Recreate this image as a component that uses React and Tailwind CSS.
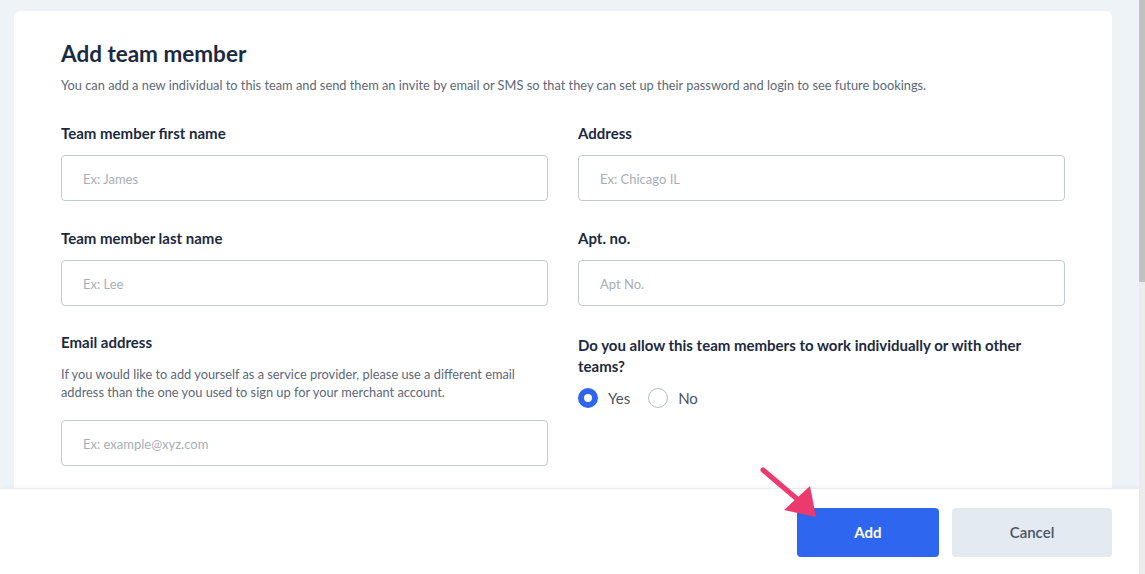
import React from "react";

const Field = ({ label, placeholder }) => (
  <div className="flex flex-col">
    <label className="text-[15px] leading-5 font-bold text-[#1b2a41]">{label}</label>
    <div className="mt-3 h-[46px] rounded-[4px] border border-[#c5cad1] bg-white flex items-center pl-[21px] pt-[3px]">
      <span className="text-[13px] text-[#a8aeb7]">{placeholder}</span>
    </div>
  </div>
);

const Radio = ({ checked, label }) => (
  <div className="flex items-center gap-[10px]">
    <span
      className={
        checked
          ? "w-5 h-5 rounded-full border-[6px] border-[#2f66f0] bg-white"
          : "w-5 h-5 rounded-full border border-[#b5bbc4] bg-white"
      }
    />
    <span className="text-[15px] text-[#4a5463]">{label}</span>
  </div>
);

export default function App() {
  return (
    <div className="flex h-[574px] w-[1145px] overflow-hidden bg-[#eef3f8]" style={{ fontFamily: "Lato, 'Open Sans', sans-serif" }}>
      <div className="relative flex flex-col w-[1139px] h-full">
        {/* Scrolling content */}
        <div className="flex-1 overflow-hidden px-[14px] pt-[11px] pr-[27px]">
          <div className="bg-white rounded-[6px] px-[47px] pt-[29px] pb-10 h-[600px]">
            <h1 className="text-[22.5px] leading-7 font-bold text-[#1b2a41]">Add team member</h1>
            <p className="mt-2 text-[12.8px] leading-[18px] text-[#5d6778]">
              You can add a new individual to this team and send them an invite by email or SMS so that they can set up their password and login to see future bookings.
            </p>

            <div className="mt-[29px] grid grid-cols-2 gap-x-[30px]">
              <div className="flex flex-col gap-[27px]">
                <Field label="Team member first name" placeholder="Ex: James" />
                <Field label="Team member last name" placeholder="Ex: Lee" />
                <div className="flex flex-col -mt-[1px]">
                  <label className="text-[15px] leading-5 font-bold text-[#1b2a41]">Email address</label>
                  <p className="mt-[13px] text-[12.8px] leading-[18px] text-[#5d6778] pr-6">
                    If you would like to add yourself as a service provider, please use a different email address than the one you used to sign up for your merchant account.
                  </p>
                  <div className="mt-[19px] h-[46px] rounded-[4px] border border-[#c5cad1] bg-white flex items-center pl-[21px] pt-[3px]">
                    <span className="text-[13px] text-[#a8aeb7]">Ex: example@xyz.com</span>
                  </div>
                </div>
              </div>

              <div className="flex flex-col gap-[27px]">
                <Field label="Address" placeholder="Ex: Chicago IL" />
                <Field label="Apt. no." placeholder="Apt No." />
                <div className="flex flex-col pt-[2px]">
                  <p className="text-[15px] leading-[21px] font-bold text-[#1b2a41] pr-10">
                    Do you allow this team members to work individually or with other teams?
                  </p>
                  <div className="mt-[10px] flex items-center gap-[18px]">
                    <Radio checked label="Yes" />
                    <Radio label="No" />
                  </div>
                </div>
              </div>
            </div>
          </div>
        </div>

        {/* Footer */}
        <div className="h-[86px] shrink-0 bg-white border-t border-[#e6e9ed] shadow-[0_-2px_4px_rgba(0,0,0,0.03)] flex items-start justify-end pt-[19px] pr-[27px] gap-[13px]">
          <button className="w-[142px] h-[49px] rounded-[4px] bg-[#2f66f0] text-white text-[15px] font-bold">Add</button>
          <button className="w-[160px] h-[49px] rounded-[4px] bg-[#e3eaf2] text-[#4a5463] text-[15px] font-semibold">Cancel</button>
        </div>

        {/* Annotation arrow */}
        <svg className="absolute left-[755px] top-[462px] pointer-events-none" width="70" height="62" viewBox="0 0 70 62">
          <line x1="8" y1="8" x2="48" y2="42" stroke="#ec3a6e" strokeWidth="5" strokeLinecap="round" />
          <polygon points="61,55 29,48 55,24" fill="#ec3a6e" />
        </svg>
      </div>

      {/* Scrollbar */}
      <div className="w-[6px] h-full bg-[#ececec] flex flex-col">
        <div className="h-[282px] bg-[#c1c1c1]" />
      </div>
    </div>
  );
}
